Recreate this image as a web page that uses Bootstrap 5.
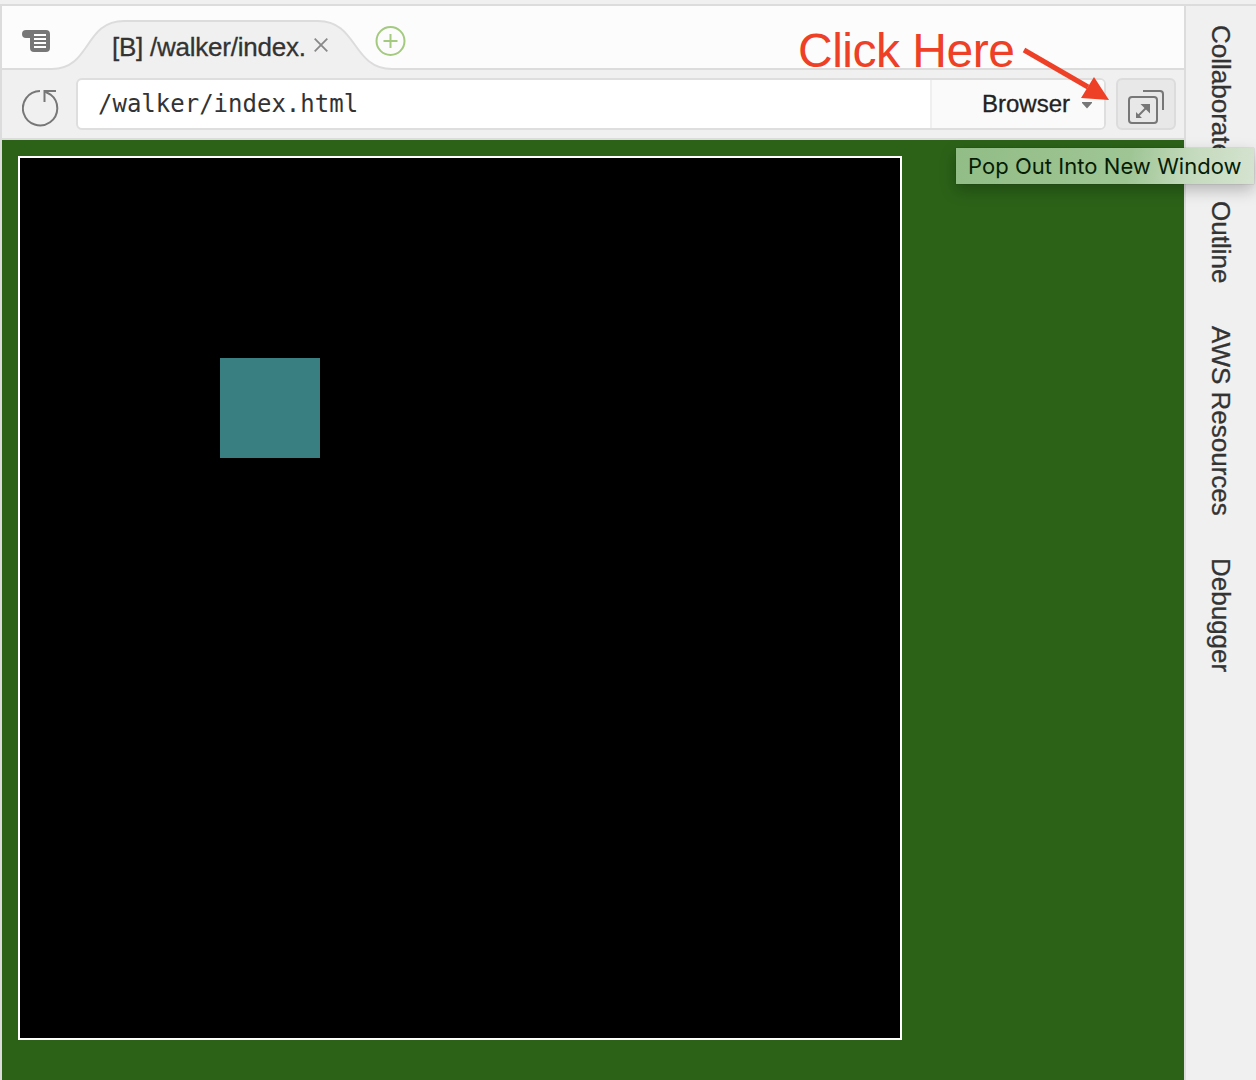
<!DOCTYPE html>
<html lang="en">
<head>
<meta charset="utf-8">
<title>Preview – /walker/index.html</title>
<link href="https://cdn.jsdelivr.net/npm/bootstrap@5.3.0/dist/css/bootstrap.min.css" rel="stylesheet">
<style>
  body { width: 1256px; height: 1080px; background: #f0f0f0; font-family: "Liberation Sans", Arial, sans-serif; color: #333; line-height: 1; }
  svg { display: block; }
  .topline { height: 6px; border-bottom: 2px solid #dcdcdc; }
  .ide { height: 1074px; }
  .pane { width: 1186px; border-left: 2px solid #dcdcdc; border-right: 2px solid #dcdcdc; }
  .tabstrip { height: 64px; background: #fcfcfc; }
  .tabshape { left: 0; top: 0; z-index: 0; }
  .tabitem { z-index: 1; }
  .tablist-icon { margin: 24px 0 0 20px; width: 28px; }
  .tabtitle { margin: 24px 0 0 62px; width: 195px; height: 34px; font-size: 26px; line-height: 34px; letter-spacing: -.24px; white-space: nowrap; -webkit-text-stroke: .3px; }
  .closeicon { margin: 32px 0 0 7px; }
  .addicon { margin: 20px 0 0 47px; }
  .toolbar-row { height: 70px; border-bottom: 2px solid #dcdcdc; padding: 8px 8px 0 20px; }
  .reload { margin-top: 10px; }
  .address { width: 1030px; height: 52px; margin-left: 17px; background: #fff; border: 2px solid #dedede; border-radius: 6px; }
  .urltext { width: 852px; padding-left: 20px; font: 24px/48px "DejaVu Sans Mono", monospace; }
  .engine { width: 174px; background: #fafafa; border-left: 2px solid #efefef; color: #222; padding-left: 50px; font-size: 24px; line-height: 47px; -webkit-text-stroke: .3px; }
  .caret { margin: 22px 0 0 12px; }
  .popout { width: 60px; height: 52px; margin-left: 10px; background: #e8e8e8; border: 2px solid #dcdcdc; border-radius: 6px; padding: 9px 0 0 9px; }
  .stage { background: #2b6218; padding: 16px; }
  .board { width: 884px; height: 884px; background: #000; border: 2px solid #fff; padding: 200px; }
  .walker { width: 100px; height: 100px; background: #397f82; }
  .sidebar { width: 70px; padding: 19px 0 0 20px; gap: 42.6px; font-size: 26px; -webkit-text-stroke: .3px; }
  .sidebar div { writing-mode: vertical-rl; line-height: 30px; white-space: nowrap; width: 30px; }
  .callout { left: 798px; top: 23px; font-size: 48px; line-height: 55px; letter-spacing: -.5px; color: #ee4026; white-space: nowrap; z-index: 3; }
  .arrow { left: 1016px; top: 40px; z-index: 4; }
  .hint { left: 956px; top: 148px; width: 298px; height: 36px; z-index: 5; padding-left: 12px; font: 22px/36px Inter, sans-serif; letter-spacing: .04px; color: #061d04; white-space: nowrap;
    background: linear-gradient(100deg, #92bd86 0%, #9fc595 58%, #c4dabd 78%, #d5e3d0 100%); box-shadow: 0 0 1px rgba(0,0,0,.35), 0 6px 16px rgba(0,0,0,.25); }
</style>
</head>
<body class="position-relative overflow-hidden">
<div class="topline"></div>
<div class="ide d-flex">
  <main class="pane d-flex flex-column flex-shrink-0">
    <div class="tabstrip d-flex align-items-start position-relative">
      <svg class="tabshape position-absolute" width="1182" height="64" viewBox="0 0 1182 64">
        <path d="M0 63H50C89 63 82 15 122 15H316C356 15 350 63 390 63H1182V64H0Z" fill="#f0f0f0"/>
        <path d="M0 63H50C89 63 82 15 122 15H316C356 15 350 63 390 63H1182" fill="none" stroke="#dcdcdc" stroke-width="2"/>
      </svg>
      <svg class="tablist-icon tabitem position-relative" width="28" height="22" viewBox="0 0 28 22">
        <path d="M4 0H24Q28 0 28 4V18Q28 22 24 22H12Q8 22 8 18V8H4A4 4 0 0 1 4 0Z" fill="#777"/>
        <path d="M12 5H24M12 9H24M12 13H24M12 17H24" stroke="#fff" stroke-width="2"/>
      </svg>
      <div class="tabtitle tabitem position-relative">[B] /walker/index.</div>
      <svg class="closeicon tabitem position-relative" width="14" height="14" viewBox="0 0 14 14"><path d="M.7.7 13.3 13.3M13.3.7.7 13.3" stroke="#888" stroke-width="1.8"/></svg>
      <svg class="addicon tabitem position-relative" width="32" height="32" viewBox="0 0 32 32"><g fill="none" stroke="#a4ca80" stroke-width="2"><circle cx="15.5" cy="15" r="14"/><path d="M8.5 15H22.5M15.5 8V22"/></g></svg>
    </div>
    <div class="toolbar-row d-flex align-items-start">
      <svg class="reload flex-shrink-0" width="37" height="39" viewBox="0 0 37 39"><g fill="none" stroke="#777" stroke-width="2"><path d="M18 3A17.2 17.2 0 1 0 28.5 6.5L23 3.5"/><path d="M34 3H22.5V14"/></g></svg>
      <div class="address d-flex flex-shrink-0 overflow-hidden">
        <div class="urltext flex-shrink-0">/walker/index.html</div>
        <div class="engine d-flex flex-shrink-0">Browser
          <svg class="caret" width="10" height="7" viewBox="0 0 10 7"><path d="M0 0H10V1L5 6.5 0 1Z" fill="#777"/></svg>
        </div>
      </div>
      <div class="popout flex-shrink-0">
        <svg width="38" height="36" viewBox="0 0 38 36"><g fill="none" stroke="#777" stroke-width="2"><rect x="2" y="8" width="28" height="26" rx="3"/><path d="M16 2H33Q36 2 36 5V21"/></g><path d="M13.5 15H23V24.5ZM9 23V29H15Z" fill="#777"/><path d="M11.5 26.5 20 18" stroke="#777" stroke-width="2"/></svg>
      </div>
    </div>
    <div class="stage flex-grow-1"><div class="board"><div class="walker"></div></div></div>
  </main>
  <aside class="sidebar d-flex flex-column">
    <div>Collaborate</div><div>Outline</div><div>AWS Resources</div><div>Debugger</div>
  </aside>
</div>
<div class="callout position-absolute">Click Here</div>
<svg class="arrow position-absolute" width="96" height="64" viewBox="0 0 96 64"><path d="M8 10 72 47" stroke="#ee4026" stroke-width="5"/><path d="M93 60 65 58 78 37Z" fill="#ee4026"/></svg>
<div class="hint position-absolute">Pop Out Into New Window</div>
<script src="https://cdn.jsdelivr.net/npm/bootstrap@5.3.0/dist/js/bootstrap.bundle.min.js"></script>
</body>
</html>
